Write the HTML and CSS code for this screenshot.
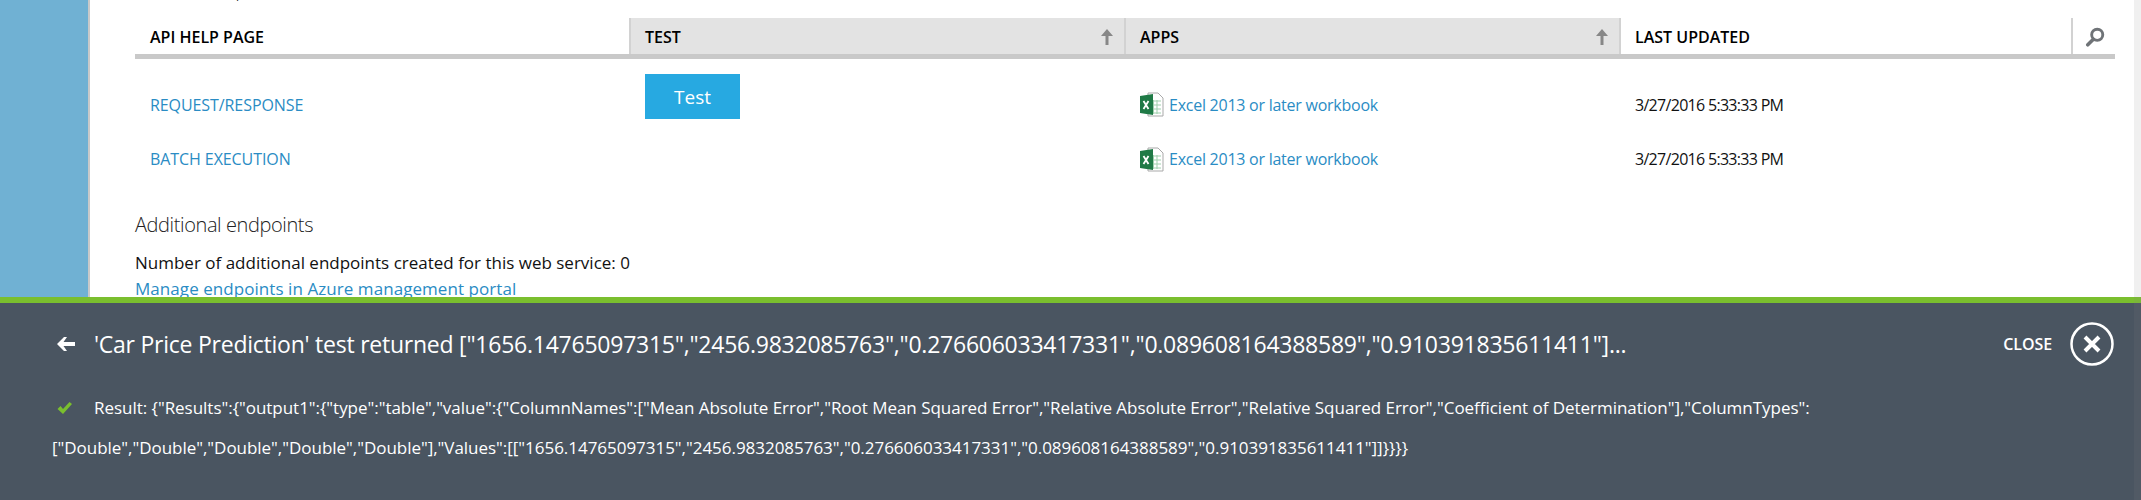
FILE: index.html
```html
<!DOCTYPE html>
<html lang="en">
<head>
<meta charset="utf-8">
<title>Car Price Prediction</title>
<link rel="stylesheet" href="styles.css">
</head>
<body>
<div class="scrollstrip"></div>
<main class="page">
  <aside class="sidebar"></aside>
  <section class="content">
    <h2 class="heading clipped">Default Endpoint</h2>
    <div class="grid head">
      <div class="th">API HELP PAGE</div>
      <div class="th sorted">TEST
        <svg class="sort" viewBox="0 0 14 16"><path d="M7 0 13 7H8.500V16H5.500V7H1Z"/></svg>
      </div>
      <div class="th sorted">APPS
        <svg class="sort" viewBox="0 0 14 16"><path d="M7 0 13 7H8.500V16H5.500V7H1Z"/></svg>
      </div>
      <div class="th">LAST UPDATED</div>
      <div class="th searchcell">
        <svg class="search" viewBox="0 0 18 18"><circle cx="11" cy="7" r="5" fill="none" stroke="#6f7377" stroke-width="2.6"/><path d="M7.500 11 2.500 16" stroke="#6f7377" stroke-width="3.2" stroke-linecap="round"/></svg>
      </div>
    </div>
    <div class="grid row first">
      <a class="td link caps">REQUEST/RESPONSE</a>
      <div class="td btncell"><button class="testbtn">Test</button></div>
      <a class="td link app">
        <svg class="xl" viewBox="0 0 25 25"><path d="M9 1H19L24 6V24H9Z" fill="#fff" stroke="#a9a9a9"/><path d="M12 9H22M12 13H22M12 17H22M12 21H22M14.500 8V22M18 8V22" stroke="#9fd0ad"/><path d="M1 4 14 2V23L1 21Z" fill="#1f7a46"/><path d="M4.500 9 9.500 17M9.500 9 4.500 17" stroke="#fff" stroke-width="1.800"/></svg>
        Excel 2013 or later workbook</a>
      <div class="td date">3/27/2016 5:33:33 PM</div>
    </div>
    <div class="grid row">
      <a class="td link caps">BATCH EXECUTION</a>
      <div class="td"></div>
      <a class="td link app">
        <svg class="xl" viewBox="0 0 25 25"><path d="M9 1H19L24 6V24H9Z" fill="#fff" stroke="#a9a9a9"/><path d="M12 9H22M12 13H22M12 17H22M12 21H22M14.500 8V22M18 8V22" stroke="#9fd0ad"/><path d="M1 4 14 2V23L1 21Z" fill="#1f7a46"/><path d="M4.500 9 9.500 17M9.500 9 4.500 17" stroke="#fff" stroke-width="1.800"/></svg>
        Excel 2013 or later workbook</a>
      <div class="td date">3/27/2016 5:33:33 PM</div>
    </div>
    <h2 class="heading extra">Additional endpoints</h2>
    <p class="count">Number of additional endpoints created for this web service: 0</p>
    <a class="manage">Manage endpoints in Azure management portal</a>
  </section>
</main>
<footer class="notice">
  <div class="titlebar">
    <svg class="back" viewBox="0 0 18 14"><path d="M0 7 7 0H10L6.500 5H18V9H6.500L10 14H7Z" fill="#fff"/></svg>
    <h1 class="title">'Car Price Prediction' test returned ["1656.14765097315","2456.9832085763","0.276606033417331","0.089608164388589","0.910391835611411"]...</h1>
    <span class="closelabel">CLOSE</span>
    <svg class="closeicon" viewBox="0 0 44 44"><circle cx="22" cy="22" r="20.500" fill="none" stroke="#fff" stroke-width="2.500"/><path d="M15 15 29 29M29 15 15 29" stroke="#fff" stroke-width="4"/></svg>
  </div>
  <p class="result"><svg class="check" viewBox="0 0 16 14"><path d="M1 8 4 5 6.500 8 13 1 15.500 3 6.500 13Z" fill="#7abf2e"/></svg>Result: {"Results":{"output1":{"type":"table","value":{"ColumnNames":["Mean Absolute Error","Root Mean Squared Error","Relative Absolute Error","Relative Squared Error","Coefficient of Determination"],"ColumnTypes":<br>["Double","Double","Double","Double","Double"],"Values":[["1656.14765097315","2456.9832085763","0.276606033417331","0.089608164388589","0.910391835611411"]]}}}}</p>
</footer>
</body>
</html>
```
FILE: styles.css
```css
* { box-sizing: border-box; }
html, body { margin: 0; height: 500px; overflow: hidden; }
body { font-family: "Open Sans", "Liberation Sans", sans-serif; color: #000; background: #fff; position: relative; }
.page { display: flex; height: 297px; overflow: hidden; }
.sidebar { width: 90px; flex: none; background: #70b1d3; border-right: 2px solid #c9c9c9; }
.content { flex: 1; padding: 0 27px 0 45px; }
.heading { margin: 0; font-weight: 300; font-size: 20px; line-height: 26px; letter-spacing: -.4px; color: #222; }
.clipped { margin-top: -24px; margin-bottom: 16px; }
.grid { display: grid; grid-template-columns: 494px 495px 495px 452px 1fr; }
.head { height: 41px; border-bottom: 5px solid #c9c9c9; }
.th { display: flex; align-items: center; justify-content: space-between; padding: 1px 10px 0 14px; font-size: 16px; font-weight: 600; border-left: 2px solid #d2d2d2; }
.th:first-child { border-left: 0; padding-left: 15px; }
.sorted { background: #e3e3e3; }
.sort { width: 14px; height: 16px; fill: #878787; }
.searchcell { justify-content: flex-start; padding-left: 12px; }
.search { width: 20px; height: 20px; }
.row { height: 54px; align-items: center; font-size: 16px; letter-spacing: -.25px; }
.first { height: 73px; align-items: start; }
.first .td { padding-top: 35px; }
.first .app { padding-top: 33px; }
.first .btncell { padding: 15px 0 0 16px; }
.td { padding-left: 15px; line-height: 22px; }
.caps { letter-spacing: -.08px; }
.link, .manage { color: #2a8cc4; }
.app { display: flex; align-items: center; gap: 5px; }
.xl { width: 25px; height: 25px; flex: none; }
.date { padding-left: 16px; color: #111; font-size: 16px; letter-spacing: -.7px; }
.testbtn { display: block; width: 95px; height: 45px; border: 0; padding: 0; background: #27a9e1; color: #fff; font: 19px "Open Sans", sans-serif; }
.extra { margin-top: 26px; }
.count { margin: 14px 0 0; font-size: 17px; line-height: 22px; color: #111; }
.manage { display: block; font-size: 17px; line-height: 22px; margin-top: 4px; letter-spacing: .06px; }
.notice { height: 203px; background: #4a5561; border-top: 6px solid #7abf2e; color: #fff; padding: 0 27px 0 52px; }
.titlebar { display: flex; align-items: center; height: 84px; padding: 0 0 2px 5px; }
.back { width: 18px; height: 14px; flex: none; margin-right: 19px; }
.title { margin: 0; flex: 1; font-weight: 400; font-size: 23px; letter-spacing: -.24px; white-space: nowrap; }
.closelabel { font-size: 16px; font-weight: 600; letter-spacing: -.1px; margin-right: 18px; }
.closeicon { width: 44px; height: 44px; flex: none; }
.result { margin: 1px 0 0; font-size: 17px; line-height: 40px; letter-spacing: -.03px; white-space: nowrap; }
.check { width: 17px; height: 14px; margin: 0 21px 0 4px; vertical-align: -1px; }
.scrollstrip { position: absolute; top: 0; right: 0; bottom: 0; width: 7px; background: rgba(130,130,130,.12); z-index: 2; }
```
